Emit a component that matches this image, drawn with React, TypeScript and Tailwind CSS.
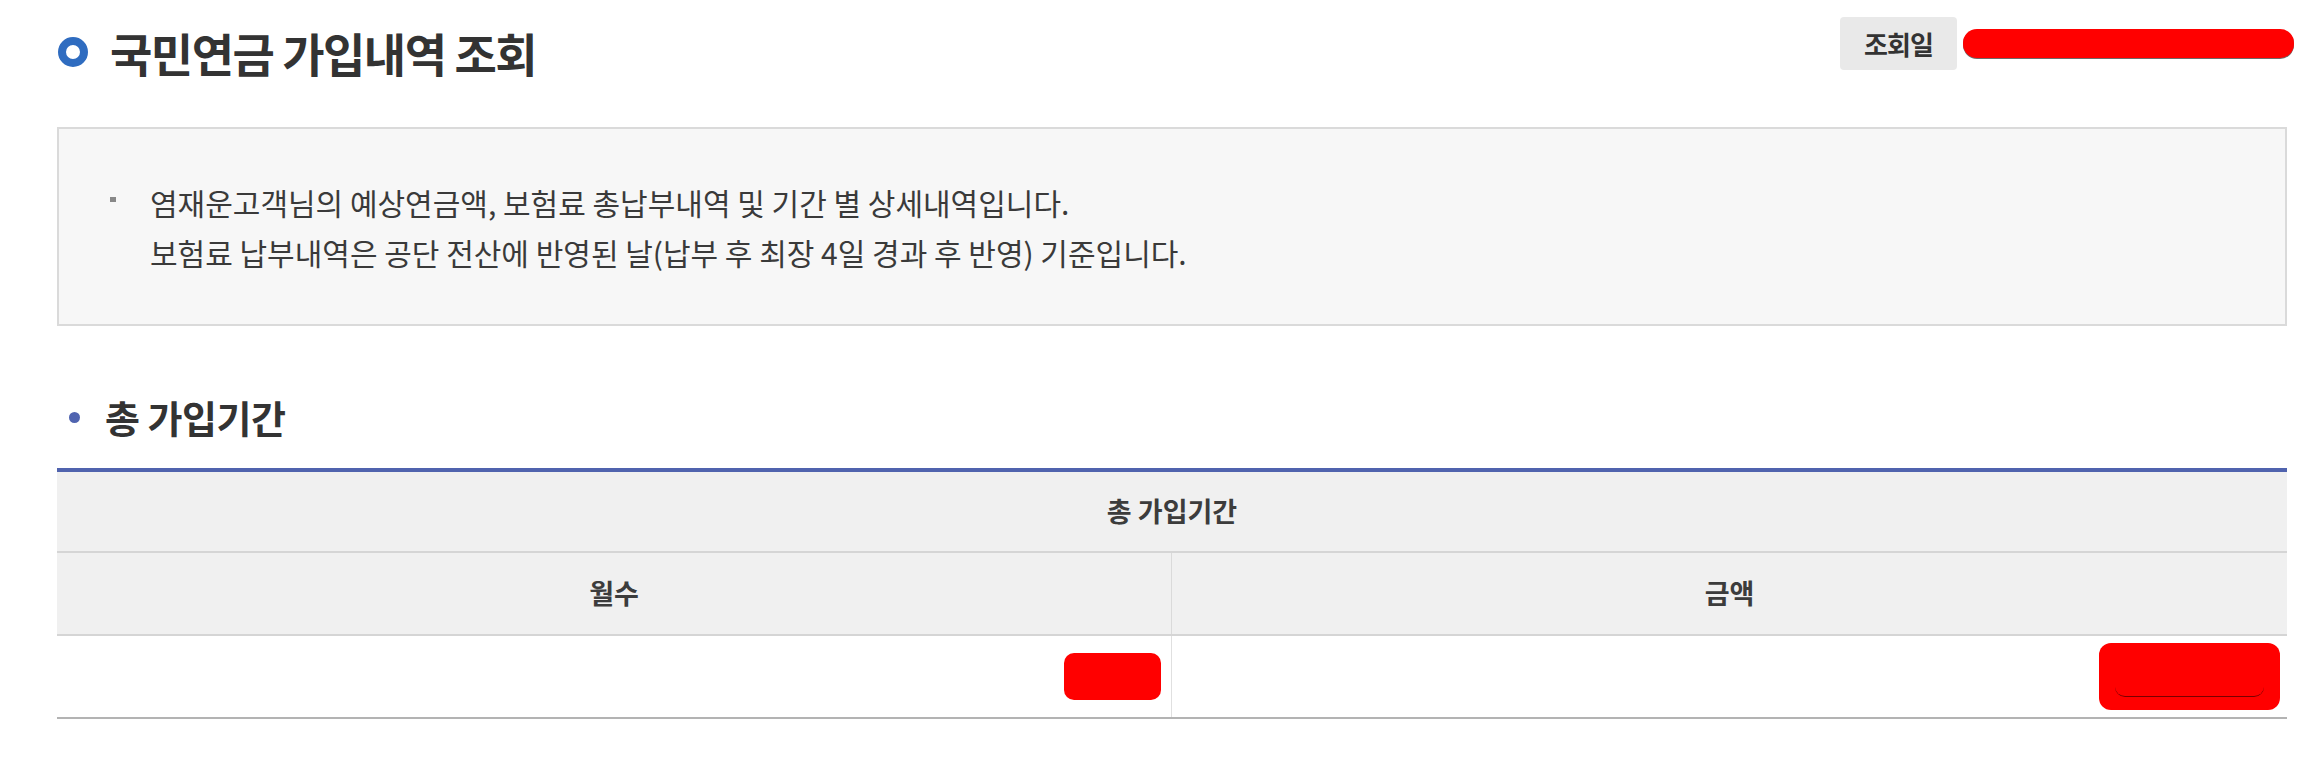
export default function App() {
  return (
    <div className="w-[2324px] min-h-[762px] bg-white text-[#333] font-['Noto_Sans_CJK_KR','Noto_Sans',sans-serif]">
      {/* page title + 조회일 */}
      <header className="flex h-[70px] items-start justify-between pl-[58px] pr-[30px] pt-[17px]">
        <div className="mt-[5px] flex h-[60px] items-center gap-[22px]">
          <span className="h-[30px] w-[30px] rounded-full border-[8px] border-[#2f6cc0]" />
          <h1 className="text-[46px] font-bold leading-none tracking-[-1.5px]">
            국민연금 가입내역 조회
          </h1>
        </div>
        <div className="flex items-center gap-[6px]">
          <span className="flex h-[53px] w-[117px] items-center justify-center rounded-[4px] bg-[#e9e9e9] text-[26px] font-bold tracking-[-1px]">
            조회일
          </span>
          <span className="h-[29px] w-[331px] rounded-[14px] bg-[#ff0000] shadow-[0_1px_0_#6b6b6b]" />
        </div>
      </header>

      <main className="pl-[57px] pr-[37px]">
        {/* notice box */}
        <section className="mt-[57px] flex h-[199px] items-center border-2 border-[#dadada] bg-[#f7f7f7] pl-[51px]">
          <ul>
            <li className="flex items-start gap-[34px]">
              <span className="mt-[20px] h-[5px] w-[6px] shrink-0 bg-[#888]" />
              <p className="text-[30px] leading-[50px] text-[#3a3a3a]">
                염재운고객님의 예상연금액, 보험료 총납부내역 및 기간 별 상세내역입니다.
                <br />
                보험료 납부내역은 공단 전산에 반영된 날(납부 후 최장 4일 경과 후 반영) 기준입니다.
              </p>
            </li>
          </ul>
        </section>

        {/* 총 가입기간 */}
        <h2 className="mt-[61px] flex h-[60px] items-center gap-[25px] pl-[12px] text-[38px] font-bold leading-none tracking-[-0.5px]">
          <span className="h-[11px] w-[11px] rounded-full bg-[#5064b0]" />
          총 가입기간
        </h2>

        <div className="mt-[21px] border-t-4 border-[#5063ae] text-[27px]">
          <div className="flex h-[81px] items-center justify-center border-b-2 border-[#d5d5d5] bg-[#f0f0f0] font-bold text-[#3c3c3c]">
            총 가입기간
          </div>
          <div className="grid grid-cols-2 border-b-2 border-[#d5d5d5] bg-[#f0f0f0] font-bold text-[#3c3c3c]">
            <div className="flex h-[81px] items-center justify-center border-r border-[#dadada]">월수</div>
            <div className="flex h-[81px] items-center justify-center">금액</div>
          </div>
          <div className="grid grid-cols-2 border-b-2 border-[#b3b3b3]">
            <div className="flex h-[81px] items-center justify-end border-r border-[#e0e0e0] pr-[10px]">
              <span className="h-[47px] w-[97px] rounded-[10px] bg-[#ff0000]" />
            </div>
            <div className="flex h-[81px] items-center justify-end pr-[7px]">
              <span className="flex h-[67px] w-[181px] flex-col justify-end rounded-[12px] bg-[#ff0000] px-[16px] pb-[13px]">
                <span className="h-[12px] rounded-b-[10px] border-b border-[#7a0000]" />
              </span>
            </div>
          </div>
        </div>
      </main>
    </div>
  );
}
